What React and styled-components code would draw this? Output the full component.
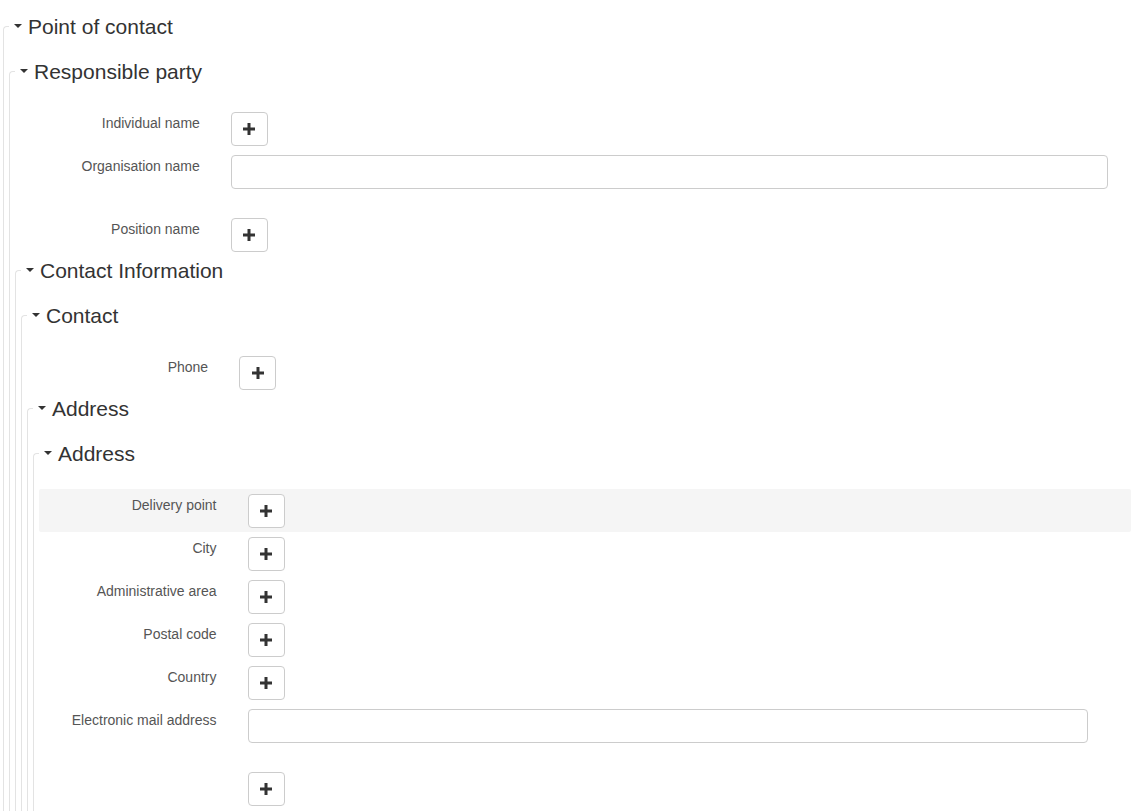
import React from "react"
import styled, { createGlobalStyle } from "styled-components"

const GlobalStyle = createGlobalStyle`
  html, body {
    margin: 0;
    padding: 0;
    overflow: hidden;
    background: #fff;
  }
  body {
    font-family: "Liberation Sans", Arial, Helvetica, sans-serif;
    font-size: 14px;
    line-height: 20px;
    color: #333;
  }
  * { box-sizing: border-box; }
`;

const Page = styled.div`
  width: 1161px;
  padding: 26px 0 0 3px;
`;

const Legend = styled.div`
  display: flex;
  align-items: center;
  height: 30px;
  margin: -15px 0 20px 0;
  padding-left: 5px;
  background: #fff;
  font-size: 21px;
  line-height: 30px;
  color: #333;
  cursor: pointer;
`;

const Caret = styled.span`
  width: 0;
  height: 0;
  margin: 0 6px 3px 0;
  border-top: 4px solid #333;
  border-left: 4px solid transparent;
  border-right: 4px solid transparent;
`;

const Group = styled.div`
  display: flex;
  flex-direction: column;
  border-top: 1px solid #e3e3e3;
  border-left: 1px solid #e3e3e3;
  border-top-left-radius: 4px;
  padding: 0 5px 10px 5px;
  margin-top: ${p => (p.$root ? "0" : "14px")};

  ${Legend} + & {
    margin-top: 9px;
  }
`;

const Row = styled.div`
  display: grid;
  grid-template-columns: 16.667% 1fr;
  padding: 5px 0 4px;
  margin-bottom: ${p => (p.$spaced ? "20px" : "0")};
  background: ${p => (p.$active ? "#f5f5f5" : "transparent")};
  border-radius: 2px;
`;

const Label = styled.label`
  padding: 1px 4.5px 0 0;
  text-align: right;
  font-size: 14px;
  line-height: 20px;
  color: #555;
`;

const Control = styled.div`
  padding: 0 43px 0 26.5px;
`;

const AddButton = styled.button`
  display: flex;
  align-items: center;
  justify-content: center;
  width: 37px;
  height: 34px;
  padding: 0;
  border: 1px solid #ccc;
  border-radius: 4px;
  background: #fff;
  color: #333;
  cursor: pointer;
`;

const TextInput = styled.input`
  display: block;
  width: 100%;
  height: 34px;
  padding: 6px 12px;
  border: 1px solid #ccc;
  border-radius: 4px;
  font-family: inherit;
  font-size: 14px;
  color: #555;
  background: #fff;
`;

const Plus = () => (
  <svg width="12" height="12" viewBox="0 0 12 12">
    <rect x="4.5" y="0" width="3" height="12" fill="#333" />
    <rect x="0" y="4.5" width="12" height="3" fill="#333" />
  </svg>
)

const Section = ({ title, root, children }) => (
  <Group $root={root}>
    <Legend>
      <Caret />
      {title}
    </Legend>
    {children}
  </Group>
)

const Field = ({ label, input, active }) => (
  <Row $spaced={input} $active={active}>
    <Label>{label}</Label>
    <Control>
      {input ? <TextInput type="text" /> : <AddButton><Plus /></AddButton>}
    </Control>
  </Row>
)

const addressFields = [
  "Delivery point",
  "City",
  "Administrative area",
  "Postal code",
  "Country",
]

export default function App() {
  return (
    <>
      <GlobalStyle />
      <Page>
        <Section title="Point of contact" root>
          <Section title="Responsible party">
            <Field label="Individual name" />
            <Field label="Organisation name" input />
            <Field label="Position name" />
            <Section title="Contact Information">
              <Section title="Contact">
                <Field label="Phone" />
                <Section title="Address">
                  <Section title="Address">
                    {addressFields.map((f, i) => (
                      <Field key={f} label={f} active={i === 0} />
                    ))}
                    <Field label="Electronic mail address" input />
                    <Field label="" />
                    <Field label="" />
                  </Section>
                </Section>
              </Section>
            </Section>
          </Section>
        </Section>
      </Page>
    </>
  )
}
